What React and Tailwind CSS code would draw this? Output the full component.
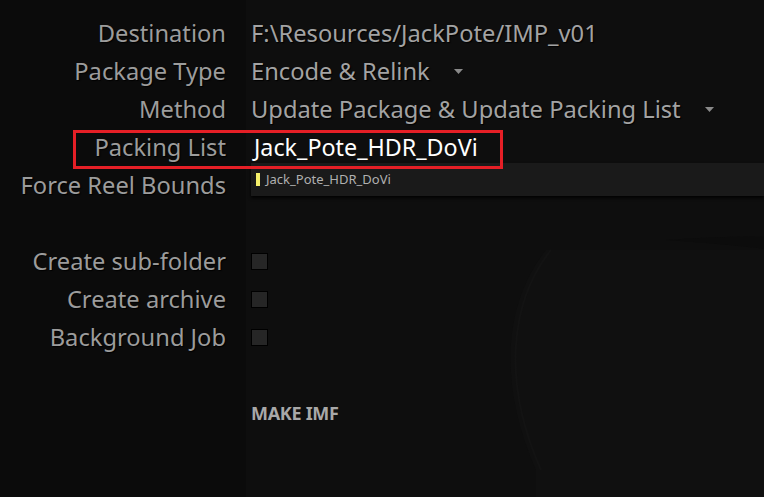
import React from "react";

const Label = ({ children }) => (
  <div className="flex h-[38px] items-center justify-end text-[#9c9c9c] [text-shadow:1px_1px_1px_#000]">
    {children}
  </div>
);

const Arrow = () => (
  <svg width="9" height="5" viewBox="0 0 9 5" className="ml-6 shrink-0">
    <path d="M0 0 H9 L4.5 5 Z" fill="#8a8a8a" />
  </svg>
);

const Checkbox = () => (
  <div className="h-[17px] w-[17px] border border-black bg-[#262626]" />
);

export default function App() {
  const font = { fontFamily: '"Noto Sans", "Open Sans", sans-serif' };
  return (
    <div
      className="relative h-[497px] w-[764px] overflow-hidden bg-[#0b0b0b]"
      style={font}
    >
      {/* right panel with faint artwork */}
      <div className="absolute inset-y-0 left-[246px] right-0 bg-[#0e0e0e]">
        <svg className="absolute inset-0" width="518" height="497" viewBox="0 0 518 497">
          <path d="M300 250 C 260 300, 250 380, 290 470 L 290 497 L 518 497 L 518 250 Z" fill="#101010" />
          <path d="M305 250 C 265 300, 255 380, 295 470" stroke="#131313" strokeWidth="2" fill="none" />
          <path d="M420 240 C 560 250, 620 260, 650 300 L 620 497 L 700 497 L 760 300 C 700 240, 560 230, 420 240 Z" fill="#0c0c0c" />
        </svg>
      </div>

      <div className="relative grid grid-cols-[226px_1fr] gap-x-[25px] pt-[14px] text-[23.7px] leading-[38px]">
        <Label>Destination</Label>
        <div className="flex h-[38px] items-center text-[#a3a3a3] [text-shadow:1px_1px_1px_#000]">
          F:\Resources/JackPote/IMP_v01
        </div>

        <Label>Package Type</Label>
        <div className="flex h-[38px] items-center text-[#a3a3a3] [text-shadow:1px_1px_1px_#000]">
          <span>Encode &amp; Relink</span>
          <Arrow />
        </div>

        <Label>Method</Label>
        <div className="flex h-[38px] items-center text-[#a3a3a3] [text-shadow:1px_1px_1px_#000]">
          <span>Update Package &amp; Update Packing List</span>
          <Arrow />
        </div>

        <Label>Packing List</Label>
        <div className="flex h-[38px] items-center pl-[3px] text-[23.3px] text-white">
          Jack_Pote_HDR_DoVi
        </div>

        <Label>Force Reel Bounds</Label>
        <div className="h-[38px]" />

        <div className="h-[38px]" />
        <div className="h-[38px]" />

        <Label>Create sub-folder</Label>
        <div className="flex h-[38px] items-center">
          <Checkbox />
        </div>

        <Label>Create archive</Label>
        <div className="flex h-[38px] items-center">
          <Checkbox />
        </div>

        <Label>Background Job</Label>
        <div className="flex h-[38px] items-center">
          <Checkbox />
        </div>

        <div />
        <div className="mt-[46px] text-[18px] font-bold leading-[22px] tracking-[-0.3px] text-[#a8a8a8]">
          MAKE IMF
        </div>
      </div>

      {/* autocomplete popup */}
      <div className="absolute left-[251px] right-0 top-[163px] flex h-[33px] items-center bg-[#1a1a1a] shadow-[0_2px_3px_rgba(0,0,0,0.9)]">
        <div className="ml-[5px] h-[13px] w-[4px] bg-[#f5f06a]" />
        <span className="ml-[6px] text-[13px] text-[#b0b0b0]">Jack_Pote_HDR_DoVi</span>
      </div>

      {/* red highlight annotation */}
      <div className="absolute left-[73px] top-[130px] h-[39px] w-[430px] border-[3px] border-[#e51f26]" />
    </div>
  );
}
